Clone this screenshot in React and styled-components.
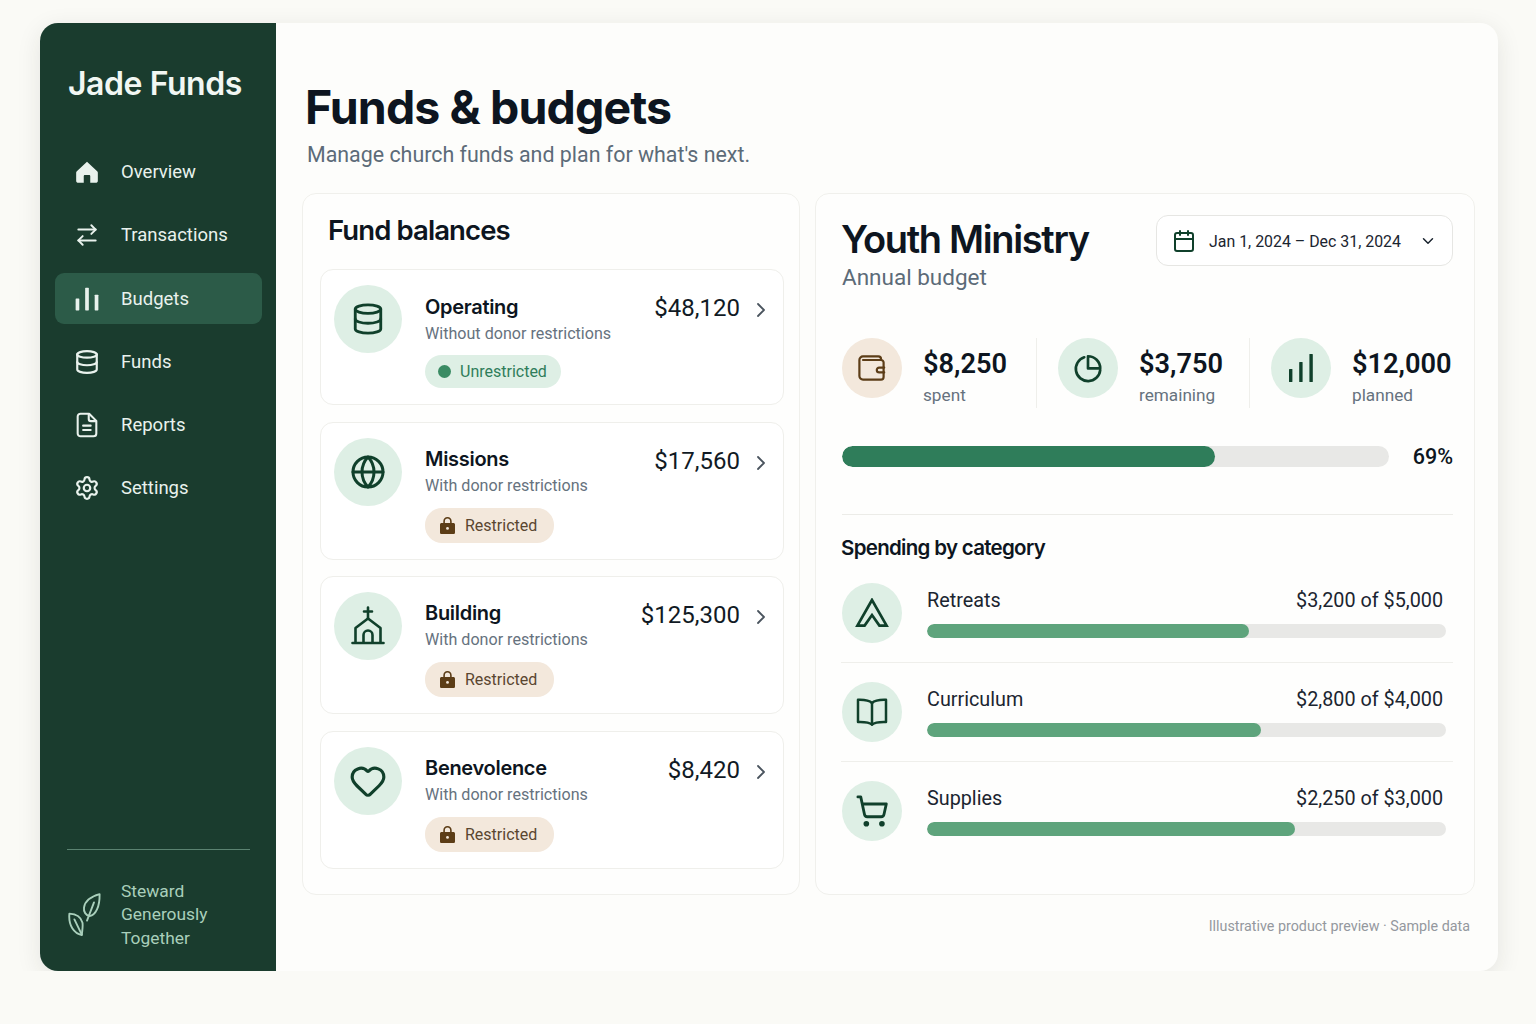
import React from 'react';
import styled, { createGlobalStyle } from 'styled-components';
import {
  ArrowRightLeft,
  Calendar,
  ChevronDown,
  ChevronRight,
  Database,
  Globe,
  Heart,
  Settings,
  ShoppingCart,
} from 'lucide-react';

const Global = createGlobalStyle`
  body{
    margin:0;
    background:#fafaf6;
    font-family:"Inter","Liberation Sans",sans-serif;
    color:#0f1720;
  }
`;

const textFont = '"Roboto","Liberation Sans",sans-serif';

const Shell = styled.div`
  width:1458px;
  height:948px;
  margin:23px 0 0 40px;
  display:flex;
  border-radius:18px;
  overflow:hidden;
  background:#fdfdfb;
  box-shadow:0 6px 24px rgba(40,40,30,0.1);
`;

const Sidebar = styled.aside`
  width:236px;
  flex-shrink:0;
  display:flex;
  flex-direction:column;
  background:#1a3c2e;
  padding:39px 14px 21px 15px;
  box-sizing:border-box;
`;

const Brand = styled.div`
  margin-left:13px;
  font-size:32px;
  line-height:44px;
  font-weight:600;
  letter-spacing:-0.45px;
  color:#f1f7f3;
`;

const Nav = styled.nav`
  margin-top:40px;
  display:flex;
  flex-direction:column;
  gap:12.3px;
`;

const NavItem = styled.div`
  box-sizing:border-box;
  height:51px;
  display:flex;
  align-items:center;
  gap:21px;
  padding:1px 0 0 19px;
  border-radius:9px;
  font-family:${textFont};
  font-size:18.5px;
  color:#e9f2ed;
  background:${(props) => (props.$active ? '#2c5b48' : 'transparent')};

  svg{
    width:26px;
    height:26px;
    flex-shrink:0;
  }
`;

const SideFoot = styled.div`
  margin:auto 12px 0 12px;
  padding-top:30px;
  border-top:1px solid #5b8371;
  display:flex;
  align-items:center;
  gap:20px;
  font-family:${textFont};
  font-size:17.4px;
  line-height:23.5px;
  color:#a9cfbb;

  svg{
    width:33px;
    height:44px;
    flex-shrink:0;
    margin-left:1px;
  }
`;

const Main = styled.main`
  flex:1;
  padding:56px 23px 0 26px;
  display:flex;
  flex-direction:column;
`;

const Title = styled.h1`
  margin:0 0 0 3px;
  font-size:46.5px;
  line-height:56px;
  font-weight:700;
  letter-spacing:-0.9px;
  color:#0d1520;
`;

const Subtitle = styled.p`
  margin:6px 0 24px 5px;
  font-family:${textFont};
  font-size:21.4px;
  line-height:28px;
  color:#5c6b78;
`;

const Columns = styled.div`
  display:flex;
  gap:15px;
  height:702px;
`;

const Panel = styled.section`
  box-sizing:border-box;
  background:#fefefd;
  border:1px solid #f0f0ec;
  border-radius:14px;
`;

const FundsPanel = styled(Panel)`
  width:498px;
  padding:18px 15px 0 17px;
`;

const PanelTitle = styled.h2`
  margin:0 0 21px 8px;
  font-size:27.5px;
  line-height:36px;
  font-weight:600;
  letter-spacing:-0.9px;
  color:#0d1520;
`;

const FundList = styled.div`
  display:flex;
  flex-direction:column;
  gap:16.67px;
`;

const FundRow = styled.div`
  box-sizing:border-box;
  height:138px;
  display:flex;
  align-items:flex-start;
  padding:15px 10px 0 13px;
  background:#fff;
  border:1px solid #efefeb;
  border-radius:13px;

  &:first-child{
    height:136px;
  }
`;

const Circle = styled.div`
  width:${(props) => props.$size}px;
  height:${(props) => props.$size}px;
  flex-shrink:0;
  border-radius:50%;
  display:flex;
  align-items:center;
  justify-content:center;
  background:${(props) => (props.$warm ? '#f3e8dc' : '#deefe5')};
  color:${(props) => (props.$warm ? '#5c3d17' : '#10402b')};
`;

const FundInfo = styled.div`
  flex:1;
  margin-left:23px;
  padding-top:${(props) => (props.$restricted ? '8px' : '9px')};
`;

const FundName = styled.div`
  font-size:20px;
  line-height:26px;
  font-weight:600;
  letter-spacing:-0.3px;
  color:#0d1520;
`;

const FundNote = styled.div`
  font-family:${textFont};
  font-size:16.1px;
  line-height:24px;
  margin-top:2px;
  color:#66727e;
`;

const Pill = styled.div`
  display:inline-flex;
  align-items:center;
  margin-top:${(props) => (props.$warm ? '10px' : '9px')};
  height:${(props) => (props.$warm ? '35px' : '33px')};
  gap:${(props) => (props.$warm ? '10px' : '9px')};
  padding:${(props) => (props.$warm ? '0 17px 0 15px' : '0 14px 0 13px')};
  border-radius:17px;
  font-family:${textFont};
  font-size:16px;
  background:${(props) => (props.$warm ? '#f3e8dc' : '#deefe5')};
  color:${(props) => (props.$warm ? '#5a4630' : '#2f7d5a')};
`;

const Dot = styled.span`
  width:13px;
  height:13px;
  border-radius:50%;
  background:#3a8b63;
`;

const Amount = styled.div`
  margin-top:8px;
  font-family:${textFont};
  font-size:24px;
  line-height:30px;
  color:#111a24;
`;

const Chevron = styled(ChevronRight)`
  margin:13px 0 0 9px;
  flex-shrink:0;
  color:#4a545e;
`;

const BudgetPanel = styled(Panel)`
  width:660px;
  padding:21px 21px 0 25px;
`;

const BudgetHead = styled.div`
  display:flex;
  justify-content:space-between;
  align-items:flex-start;
`;

const BudgetTitle = styled.h2`
  margin:0;
  font-size:38px;
  line-height:48px;
  font-weight:600;
  letter-spacing:-1.35px;
  color:#0d1520;
`;

const BudgetNote = styled.div`
  margin-left:1px;
  font-family:${textFont};
  font-size:22.5px;
  line-height:28px;
  color:#5c6b78;
`;

const DateButton = styled.div`
  box-sizing:border-box;
  width:297px;
  height:51px;
  display:flex;
  align-items:center;
  padding:1px 15px 0 15px;
  background:#fff;
  border:1px solid #e6e6e3;
  border-radius:12px;
  font-family:${textFont};
  font-size:15.9px;
  color:#1b2530;

  span{
    flex:1;
    margin-left:13px;
  }
`;

const Stats = styled.div`
  margin-top:47px;
  display:grid;
  grid-template-columns:196px 213px 1fr;
`;

const Stat = styled.div`
  height:70px;
  display:flex;
  gap:21px;
  padding-left:21px;
  border-right:1px solid #efefeb;

  &:first-child{
    padding-left:1px;
  }

  &:last-child{
    border-right:none;
  }
`;

const StatText = styled.div`
  padding-top:8px;
`;

const StatValue = styled.div`
  font-family:${textFont};
  font-size:27.2px;
  line-height:36px;
  font-weight:600;
  color:#0d1520;
`;

const StatLabel = styled.div`
  font-family:${textFont};
  font-size:17.2px;
  line-height:26px;
  color:#66727e;
`;

const Overall = styled.div`
  margin:38px 0 0 1px;
  display:flex;
  align-items:center;
  justify-content:space-between;
  padding-bottom:47px;
  border-bottom:1px solid #ececE8;
`;

const Track = styled.div`
  width:${(props) => props.$width}px;
  height:${(props) => props.$height}px;
  border-radius:${(props) => props.$height / 2}px;
  background:#e8e8e6;
  overflow:hidden;
`;

const Fill = styled.div`
  height:100%;
  border-radius:inherit;
  background:${(props) => props.$color};
`;

const Percent = styled.div`
  font-family:${textFont};
  font-size:21.5px;
  line-height:21px;
  font-weight:500;
  color:#0d1520;
`;

const SectionTitle = styled.h3`
  margin:19px 0 21px 0;
  font-size:20.5px;
  line-height:28px;
  font-weight:600;
  letter-spacing:-0.7px;
  color:#0d1520;
`;

const CategoryRow = styled.div`
  display:flex;
  gap:25px;
  padding:0 0 19px 1px;
  margin-bottom:19px;
  border-bottom:1px solid #efefeb;

  &:last-child{
    border-bottom:none;
  }
`;

const CategoryBody = styled.div`
  padding-top:5px;
`;

const CategoryLine = styled.div`
  display:flex;
  justify-content:space-between;
  padding-right:3px;
  margin-bottom:10px;
  font-family:${textFont};
  font-size:19.8px;
  line-height:26px;
  color:#1b2530;
`;

const Caption = styled.div`
  margin-top:21px;
  padding-right:5px;
  text-align:right;
  font-family:${textFont};
  font-size:14.3px;
  line-height:20px;
  color:#94989e;
`;

function HomeIcon() {
  return (
    <svg viewBox="0 0 24 24" fill="currentColor">
      <path d="M12 2.6 2.6 11.2c-.5.5-.6 1-.6 1.6V20c0 1.2.8 2 2 2h5v-6.2c0-.7.4-1.1 1.1-1.1h3.8c.7 0 1.1.4 1.1 1.1V22h5c1.2 0 2-.8 2-2v-7.2c0-.6-.1-1.1-.6-1.6L12 2.6Z" />
    </svg>
  );
}

function BarsIcon() {
  return (
    <svg viewBox="0 0 24 24" fill="currentColor">
      <rect x="1.5" y="11.5" width="3.4" height="11" rx="0.6" />
      <rect x="10.3" y="1.5" width="3.4" height="21" rx="0.6" />
      <rect x="19.1" y="8" width="3.4" height="14.5" rx="0.6" />
    </svg>
  );
}

function ReportIcon() {
  return (
    <svg viewBox="0 0 24 24" fill="none" stroke="currentColor" strokeWidth="1.9" strokeLinecap="round" strokeLinejoin="round">
      <path d="M14 1.6H6A2.6 2.6 0 0 0 3.4 4.2v15.6A2.6 2.6 0 0 0 6 22.4h12a2.6 2.6 0 0 0 2.6-2.6V8.2L14 1.6Z" />
      <path d="M13.6 2v4.4a2 2 0 0 0 2 2H20" />
      <path d="M8.4 12.6h7M8.4 16.6h7" />
    </svg>
  );
}

function LeafIcon() {
  return (
    <svg viewBox="0 0 33 44" fill="none" stroke="currentColor" strokeWidth="1.9" strokeLinejoin="round" strokeLinecap="round">
      <path d="M31.6 1.2c-8 2.2-14.6 6.6-15.6 13.4-.6 4.2 1.8 7.8 5.6 8.4 6.2-.8 10.2-9.4 10-21.8Z" />
      <path d="M26 9.4 19 27.6" />
      <path d="M1.4 20.6c6.4.4 11.6 3.6 13 8.8.8 3.2-.2 8.2-.6 12.6-7.6-1.4-13.6-9.4-12.4-21.4Z" />
      <path d="M6.4 26.4 13.8 41.6" />
    </svg>
  );
}

function LockIcon() {
  return (
    <svg width="15" height="17" viewBox="0 0 15 17" fill="#5c3d17">
      <path d="M7.5 0C5 0 3.3 1.8 3.3 4.3V6H1.6C.7 6 0 6.7 0 7.6v7.8c0 .9.7 1.6 1.6 1.6h11.8c.9 0 1.6-.7 1.6-1.6V7.6c0-.9-.7-1.6-1.6-1.6h-1.7V4.3C11.7 1.8 10 0 7.5 0Zm-2.6 6V4.3c0-1.6 1-2.7 2.6-2.7s2.6 1.1 2.6 2.7V6H4.9Z" />
      <circle cx="7.5" cy="11.4" r="1.4" fill="#f3e8dc" />
    </svg>
  );
}

function ChurchIcon() {
  return (
    <svg width="34" height="40" viewBox="0 0 34 40" fill="none" stroke="currentColor" strokeWidth="2.6" strokeLinecap="round" strokeLinejoin="round">
      <path d="M17 1.5v11M13 5.5h8" />
      <path d="M4.5 36V22L17 12.5 29.5 22v14" />
      <path d="M12.5 36v-7a4.5 4.5 0 0 1 9 0v7" />
      <path d="M1.5 37h31" />
    </svg>
  );
}

function WalletIcon() {
  return (
    <svg width="28" height="26" viewBox="0 0 28 26" fill="none" stroke="currentColor" strokeWidth="2.2" strokeLinejoin="round" strokeLinecap="round">
      <path d="M23 5V4a2.6 2.6 0 0 0-2.6-2.6H5A3.6 3.6 0 0 0 1.4 5v16A3.6 3.6 0 0 0 5 24.6h18a2.6 2.6 0 0 0 2.6-2.6V7.6A2.6 2.6 0 0 0 23 5H5" />
      <path d="M26.2 12.6h-5a2.4 2.4 0 0 0 0 4.8h5" />
    </svg>
  );
}

function PieIcon() {
  return (
    <svg width="30" height="30" viewBox="0 0 28 28" fill="none" stroke="currentColor" strokeWidth="2.5" strokeLinecap="round" strokeLinejoin="round">
      <path d="M10.5 4A11.4 11.4 0 1 0 25.4 16" />
      <path d="M14 3a11.4 11.4 0 0 1 11.4 11.4H14V3Z" />
    </svg>
  );
}

function SignalIcon() {
  return (
    <svg width="26" height="28" viewBox="0 0 26 28" fill="currentColor">
      <rect x="1" y="15" width="3.4" height="13" rx="0.6" />
      <rect x="11.2" y="8" width="3.4" height="20" rx="0.6" />
      <rect x="21.4" y="0" width="3.4" height="28" rx="0.6" />
    </svg>
  );
}

function TentIcon() {
  return (
    <svg width="34" height="30" viewBox="0 0 34 30" fill="none" stroke="currentColor" strokeWidth="2.7" strokeLinejoin="miter" strokeLinecap="round">
      <path d="M17 2 2.4 27.6h7.2L17 17l7.4 10.6h7.2L17 2Z" />
    </svg>
  );
}

function BookIcon() {
  return (
    <svg width="32" height="30" viewBox="0 0 32 30" fill="none" stroke="currentColor" strokeWidth="2.5" strokeLinejoin="round" strokeLinecap="round">
      <path d="M16 6C13 3 8 2.6 2 2.8V25c6-.2 11 0 14 2.6 3-2.6 8-2.8 14-2.6V2.8C24 2.6 19 3 16 6Z" />
      <path d="M16 6v21.6" />
    </svg>
  );
}

const navItems = [
  { label: 'Overview', icon: <HomeIcon /> },
  { label: 'Transactions', icon: <ArrowRightLeft strokeWidth={1.8} /> },
  { label: 'Budgets', icon: <BarsIcon />, active: true },
  { label: 'Funds', icon: <Database strokeWidth={2} /> },
  { label: 'Reports', icon: <ReportIcon /> },
  { label: 'Settings', icon: <Settings strokeWidth={2} /> },
];

const funds = [
  { name: 'Operating', note: 'Without donor restrictions', amount: '$48,120', icon: <Database size={34} strokeWidth={2} /> },
  { name: 'Missions', note: 'With donor restrictions', amount: '$17,560', restricted: true, icon: <Globe size={36} strokeWidth={2} /> },
  { name: 'Building', note: 'With donor restrictions', amount: '$125,300', restricted: true, icon: <ChurchIcon /> },
  { name: 'Benevolence', note: 'With donor restrictions', amount: '$8,420', restricted: true, icon: <Heart size={38} strokeWidth={2} /> },
];

const stats = [
  { value: '$8,250', label: 'spent', warm: true, icon: <WalletIcon /> },
  { value: '$3,750', label: 'remaining', icon: <PieIcon /> },
  { value: '$12,000', label: 'planned', icon: <SignalIcon /> },
];

const categories = [
  { name: 'Retreats', value: '$3,200 of $5,000', pct: 62, icon: <TentIcon /> },
  { name: 'Curriculum', value: '$2,800 of $4,000', pct: 64.4, icon: <BookIcon /> },
  { name: 'Supplies', value: '$2,250 of $3,000', pct: 71, icon: <ShoppingCart size={34} strokeWidth={2} /> },
];

export default function App() {
  return (
    <>
      <Global />
      <Shell>
        <Sidebar>
          <Brand>Jade Funds</Brand>
          <Nav>
            {navItems.map((item) => (
              <NavItem key={item.label} $active={item.active}>
                {item.icon}
                {item.label}
              </NavItem>
            ))}
          </Nav>
          <SideFoot>
            <LeafIcon />
            <div>
              Steward
              <br />
              Generously
              <br />
              Together
            </div>
          </SideFoot>
        </Sidebar>

        <Main>
          <Title>Funds &amp; budgets</Title>
          <Subtitle>Manage church funds and plan for what's next.</Subtitle>

          <Columns>
            <FundsPanel>
              <PanelTitle>Fund balances</PanelTitle>
              <FundList>
                {funds.map((fund) => (
                  <FundRow key={fund.name}>
                    <Circle $size={68}>{fund.icon}</Circle>
                    <FundInfo $restricted={fund.restricted}>
                      <FundName>{fund.name}</FundName>
                      <FundNote>{fund.note}</FundNote>
                      {fund.restricted ? (
                        <Pill $warm>
                          <LockIcon />
                          Restricted
                        </Pill>
                      ) : (
                        <Pill>
                          <Dot />
                          Unrestricted
                        </Pill>
                      )}
                    </FundInfo>
                    <Amount>{fund.amount}</Amount>
                    <Chevron size={24} strokeWidth={1.8} />
                  </FundRow>
                ))}
              </FundList>
            </FundsPanel>

            <BudgetPanel>
              <BudgetHead>
                <div>
                  <BudgetTitle>Youth Ministry</BudgetTitle>
                  <BudgetNote>Annual budget</BudgetNote>
                </div>
                <DateButton>
                  <Calendar size={24} strokeWidth={2} color="#10402b" />
                  <span>Jan 1, 2024 – Dec 31, 2024</span>
                  <ChevronDown size={18} strokeWidth={2} />
                </DateButton>
              </BudgetHead>

              <Stats>
                {stats.map((stat) => (
                  <Stat key={stat.label}>
                    <Circle $size={60} $warm={stat.warm}>{stat.icon}</Circle>
                    <StatText>
                      <StatValue>{stat.value}</StatValue>
                      <StatLabel>{stat.label}</StatLabel>
                    </StatText>
                  </Stat>
                ))}
              </Stats>

              <Overall>
                <Track $width={547} $height={21}>
                  <Fill $color="#2f7d5a" style={{ width: '68.2%' }} />
                </Track>
                <Percent>69%</Percent>
              </Overall>

              <SectionTitle>Spending by category</SectionTitle>
              {categories.map((cat) => (
                <CategoryRow key={cat.name}>
                  <Circle $size={60}>{cat.icon}</Circle>
                  <CategoryBody>
                    <CategoryLine>
                      <span>{cat.name}</span>
                      <span>{cat.value}</span>
                    </CategoryLine>
                    <Track $width={519} $height={14}>
                      <Fill $color="#5ea47c" style={{ width: `${cat.pct}%` }} />
                    </Track>
                  </CategoryBody>
                </CategoryRow>
              ))}
            </BudgetPanel>
          </Columns>

          <Caption>Illustrative product preview · Sample data</Caption>
        </Main>
      </Shell>
    </>
  );
}
